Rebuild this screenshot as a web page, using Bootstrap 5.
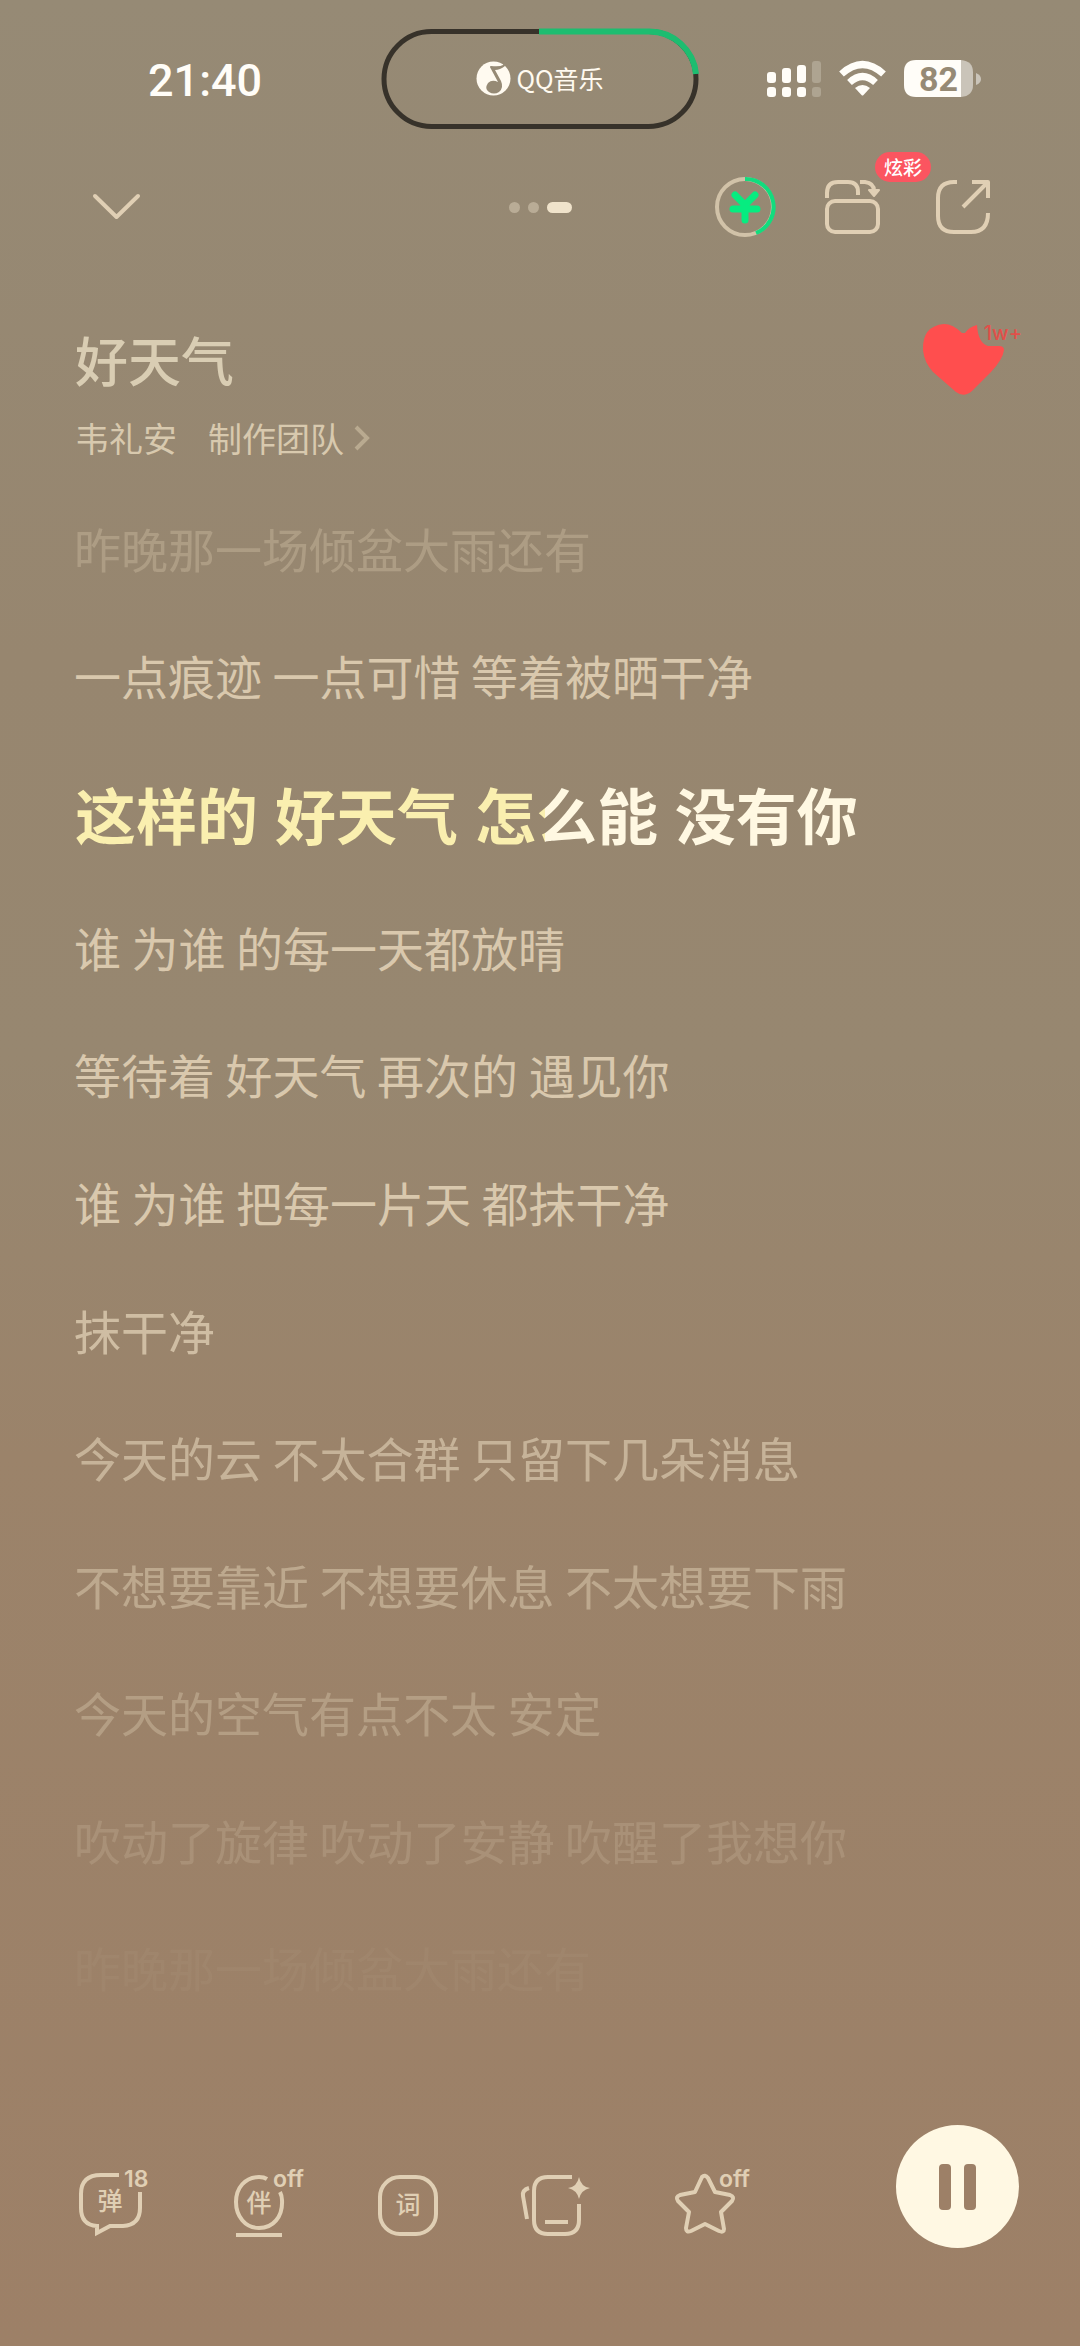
<!DOCTYPE html>
<html lang="zh-CN">
<head>
<meta charset="utf-8">
<meta name="viewport" content="width=device-width, initial-scale=1">
<title>好天气 - QQ音乐</title>
<link href="https://cdn.jsdelivr.net/npm/bootstrap@5.3.0/dist/css/bootstrap.min.css" rel="stylesheet">
<style>
  :root { --cream: #e0cfb4; --soft: #d8c9ae; }
  body {
    background: linear-gradient(#968a75 0%, #97866f 28%, #978770 45%, #9b836a 62%, #9d8067 100%);
    font-family: "Noto Sans CJK SC", sans-serif;
    color: var(--soft);
  }
  svg { display: block; fill: none; overflow: visible; }
  button.bare { background: none; border: 0; padding: 0; color: var(--cream); position: relative; }
  .side { flex: 1 1 0; min-width: 0; }
  .status-bar { height: 158px; padding-top: 28px; }
  .clock { font: 500 45px/50px Roboto, sans-serif; color: #fffdf8; padding: 28px 0 0 148px; }
  .status-icons { padding: 32px 98px 0 0; gap: 18px; }
  .island { width: 318px; height: 102px; }
  .island-brand { font-size: 25px; font-weight: 400; line-height: 36px; color: #fffaf0; gap: 5px; padding-bottom: 2px; }
  .battery-num { font: 700 34px Roboto, sans-serif; fill: #968a75; }
  .nav-row { height: 98px; padding: 0 90px; }
  .dots { gap: 8px; }
  .dot { width: 11px; height: 11px; border-radius: 6px; background: #b9ac96; }
  .dot-on { width: 25px; background: #f0e3cb; }
  .nav-actions { gap: 50px; }
  .nav-actions .last { margin-left: 6px; }
  .tag-hot { top: -28px; left: 50px; width: 56px; height: 30px; border-radius: 15px; background: #fb5560; color: #fff; font-size: 19px; line-height: 30px; font-weight: 500; }
  .song-head { height: 228px; padding: 60px 58px 0 75px; }
  .song-name { font-size: 53px; line-height: 86px; font-weight: 500; color: #d9cdb3; }
  .song-meta { font-size: 34px; line-height: 48px; margin-top: 12px; gap: 31px; }
  .song-meta a { color: var(--soft); text-decoration: none; }
  .like-btn { width: 100px; margin-top: 7px; }
  .like-count { font: 500 20px/20px Inter, sans-serif; color: #e24f4a; right: 0; top: 0; }
  .lyrics { padding-left: 74px; font-size: 47px; line-height: 68px; color: #d9c8ad; }
  .lyrics li { flex: 1 1 0; display: flex; align-items: center; white-space: nowrap; }
  .lyrics .now { flex: 0 0 144px; padding: 16px 0 0 1px; font-family: "Liberation Sans", "Noto Sans CJK SC", sans-serif; font-size: 61px; line-height: 92px; font-weight: 700; }
  .sung { background: linear-gradient(90deg, #faefaf 60%, #fff8e2 60%); -webkit-background-clip: text; background-clip: text; color: transparent; }
  .fade-a { opacity: .34; } .fade-b { opacity: .85; } .fade-c { opacity: .7; } .fade-d { opacity: .55; }
  .fade-e { opacity: .4; } .fade-f { opacity: .22; } .fade-g { opacity: .06; }
  .tool-bar { height: 315px; padding: 94px 61px 0 76px; }
  .tools { gap: 24px; padding-top: 43px; }
  .glyph { font: 500 25px "Noto Sans CJK SC", sans-serif; fill: currentColor; text-anchor: middle; }
  .note { font: 600 23px Inter, sans-serif; fill: currentColor; }
  .pause { width: 123px; height: 123px; border-radius: 50%; border: 0; background: #fff8e3; padding: 0; }
</style>
</head>
<body>
<main class="d-flex flex-column min-vh-100">
  <header>
    <div class="status-bar d-flex align-items-start">
      <div class="side"><div class="clock">21:40</div></div>
      <div class="island position-relative d-flex align-items-center justify-content-center">
        <svg class="position-absolute top-0 start-0" width="318" height="102" viewBox="0 0 318 102" aria-hidden="true">
          <rect x="3" y="3.500" width="312" height="95" rx="47.500" stroke="#37322a" stroke-width="5"/>
          <path d="M158 3.500H268A47 47 0 0 1 315 46" stroke="#1dbd70" stroke-width="6"/>
        </svg>
        <div class="island-brand d-flex align-items-center">
          <svg width="35" height="35" viewBox="0 0 35 35" aria-hidden="true">
            <circle cx="17.500" cy="17.500" r="17" fill="#fffaf0"/>
            <path d="M28 1L27 4Q24 6 15 5Q13 5 15 8L22 21Q16 18 12 22Q8 28 13 31Q18 34 23 31Q28 27 25 20L19 9Q24 9 29 5Z" fill="#968a75"/>
          </svg>
          <span>QQ音乐</span>
        </div>
      </div>
      <div class="side"><div class="status-icons d-flex justify-content-end">
        <svg width="54" height="38" viewBox="0 0 54 38" aria-label="信号">
          <g fill="#fffdf8"><rect x="0" y="12" width="9" height="11" rx="3"/><rect x="15" y="8" width="9" height="15" rx="3"/><rect x="30" y="5" width="9" height="18" rx="3"/>
          <rect x="0" y="27" width="9" height="10" rx="3"/><rect x="15" y="27" width="9" height="10" rx="3"/><rect x="30" y="27" width="9" height="10" rx="3"/></g>
          <g fill="#aea491"><rect x="45" y="1" width="9" height="22" rx="3"/><rect x="45" y="27" width="9" height="10" rx="3"/></g>
        </svg>
        <svg width="47" height="38" viewBox="0 0 47 38" aria-label="Wi-Fi">
          <g stroke="#fffdf8" stroke-width="7"><path d="M2.500 14Q23.500-5 44.500 14"/><path d="M10.500 22.500Q23.500 10.500 36.500 22.500"/></g>
          <path d="M16 28Q23.500 22 31 28L24.500 35Q23.500 36 22.500 35Z" fill="#fffdf8"/>
        </svg>
        <svg width="78" height="38" viewBox="0 0 78 38" aria-label="电量">
          <path d="M12 0H57V37H12Q0 37 0 25V12Q0 0 12 0Z" fill="#fffdf8"/>
          <path d="M57 0Q69 1 69 12V25Q69 36 57 37Z" fill="#cac4b9"/>
          <path d="M72 13Q77 15 77 19T72 25Z" fill="#cac4b9"/>
          <text class="battery-num" x="15" y="31">82</text>
        </svg>
      </div></div>
    </div>
    <nav class="nav-row d-flex align-items-center">
      <div class="side">
        <button class="bare" aria-label="收起"><svg width="52" height="28" viewBox="0 0 52 28" stroke="currentColor" stroke-width="4" stroke-linecap="round" stroke-linejoin="round"><path d="M5 5L26.500 26L48 5"/></svg></button>
      </div>
      <div class="dots d-flex align-items-center"><span class="dot"></span><span class="dot"></span><span class="dot dot-on"></span></div>
      <div class="side nav-actions d-flex justify-content-end align-items-center">
        <button class="bare" aria-label="福利">
          <svg width="60" height="60" viewBox="0 0 60 60"><circle cx="30" cy="30" r="28" stroke="#d1c2a8" stroke-width="4"/>
            <path d="M30 2A28 28 0 0 1 41 56" stroke="#12dc7e" stroke-width="4"/>
            <path d="M20 18L30 28L40 18M18 32H42M30 28V43" stroke="#06ec80" stroke-width="7" stroke-linejoin="round" stroke-linecap="round"/></svg>
        </button>
        <button class="bare" aria-label="炫彩播放器">
          <svg width="55" height="54" viewBox="0 0 55 54" stroke="currentColor" stroke-width="4">
            <rect x="2" y="21" width="51" height="31" rx="8"/><path d="M2 18V13Q2 2 13 2H23Q33 2 33 12V15M35 2H40Q49 3 49 11"/><path d="M44 10H54L49 16Z" fill="currentColor" stroke-width="2" stroke-linejoin="round"/></svg>
          <span class="tag-hot position-absolute text-center">炫彩</span>
        </button>
        <button class="bare last" aria-label="分享">
          <svg width="54" height="54" viewBox="0 0 54 54" stroke="currentColor" stroke-width="4"><path d="M21 2H18Q2 2 2 18V36Q2 52 18 52H35Q52 52 52 33M36 2H52V18M51 3L27 27" stroke-linejoin="round"/></svg>
        </button>
      </div>
    </nav>
    <section class="song-head d-flex justify-content-between">
      <div>
        <h1 class="song-name m-0">好天气</h1>
        <div class="song-meta d-flex">
          <a href="#">韦礼安</a>
          <a href="#" class="d-flex align-items-center">制作团队<svg class="ms-2" width="18" height="26" viewBox="0 0 18 26" stroke="#b9aa90" stroke-width="4"><path d="M4 2L15 13L4 24"/></svg></a>
        </div>
      </div>
      <button class="bare like-btn align-self-start" aria-label="喜欢">
        <svg width="83" height="74" viewBox="0 0 83 74"><path d="M55 2Q47 4 43 10H40Q31 1 22 1Q0 3 1 27Q2 39 11 49L34 69Q42 75 50 68L69 49Q81 36 82 27Q82 23 77 23H66Q56 20 55 2Z" fill="#ff4e4e"/></svg>
        <span class="like-count position-absolute">1w+</span>
      </button>
    </section>
  </header>

  <ul class="lyrics list-unstyled flex-grow-1 d-flex flex-column m-0">
    <li class="fade-a">昨晚那一场倾盆大雨还有</li>
    <li>一点痕迹 一点可惜 等着被晒干净</li>
    <li class="now"><span class="sung">这样的 好天气 怎么能 没有你</span></li>
    <li>谁 为谁 的每一天都放晴</li>
    <li>等待着 好天气 再次的 遇见你</li>
    <li>谁 为谁 把每一片天 都抹干净</li>
    <li class="fade-b">抹干净</li>
    <li class="fade-c">今天的云 不太合群 只留下几朵消息</li>
    <li class="fade-d">不想要靠近 不想要休息 不太想要下雨</li>
    <li class="fade-e">今天的空气有点不太 安定</li>
    <li class="fade-f">吹动了旋律 吹动了安静 吹醒了我想你</li>
    <li class="fade-g">昨晚那一场倾盆大雨还有</li>
  </ul>

  <footer class="tool-bar d-flex justify-content-between align-items-start">
    <div class="tools d-flex">
      <button class="bare" aria-label="弹幕 18">
        <svg width="125" height="72" viewBox="0 0 125 72" stroke="currentColor" stroke-width="4"><path d="M43 7H25Q5 7 5 26V40Q5 57 21 58V65L34 58H47Q64 57 64 40V24"/>
          <g stroke="none"><text class="glyph" x="34" y="42">弹</text><text class="note" x="48" y="19">18</text></g></svg>
      </button>
      <button class="bare" aria-label="伴唱 off">
        <svg width="125" height="72" viewBox="0 0 125 72" stroke="currentColor" stroke-width="4"><path d="M42 11Q39 9 34 9C20 9 11 20 11 34S20 60 34 60S58 49 57 32Q57 28 55 24M11 67H57"/>
          <g stroke="none"><text class="glyph" x="34" y="44">伴</text><text class="note" x="48" y="19">off</text></g></svg>
      </button>
      <button class="bare" aria-label="歌词">
        <svg width="125" height="72" viewBox="0 0 125 72" stroke="currentColor" stroke-width="4"><rect x="6" y="9" width="56" height="57" rx="20"/>
          <g stroke="none"><text class="glyph" x="34" y="46">词</text></g></svg>
      </button>
      <button class="bare" aria-label="卡片">
        <svg width="125" height="72" viewBox="0 0 125 72" stroke="currentColor" stroke-width="4"><path d="M49 9H25Q11 9 11 23V52Q11 66 25 66H42Q56 66 56 52V36M22 54H45M6 20Q-1 22 0 28L4 51"/>
          <path d="M56 9Q58 19 67 20Q58 22 56 31Q54 22 45 20Q54 19 56 9Z" fill="currentColor" stroke="none"/></svg>
      </button>
      <button class="bare" aria-label="收藏 off">
        <svg width="80" height="72" viewBox="0 0 80 72" stroke="currentColor" stroke-width="4" stroke-linejoin="round"><path d="M30 9Q33 6 36 10L43 24L58 27Q63 29 60 33L49 44L52 61Q52 65 47 63L33 56L19 63Q14 65 14 60L17 44L6 33Q3 29 8 27L23 24Z"/>
          <g stroke="none"><text class="note" x="47" y="19">off</text></g></svg>
      </button>
    </div>
    <button class="pause d-flex align-items-center justify-content-center" aria-label="暂停">
      <svg width="37" height="46" viewBox="0 0 37 46"><g fill="#9d8067"><rect width="12" height="46" rx="4"/><rect x="25" width="12" height="46" rx="4"/></g></svg>
    </button>
  </footer>
</main>
<script src="https://cdn.jsdelivr.net/npm/bootstrap@5.3.0/dist/js/bootstrap.bundle.min.js"></script>
</body>
</html>
